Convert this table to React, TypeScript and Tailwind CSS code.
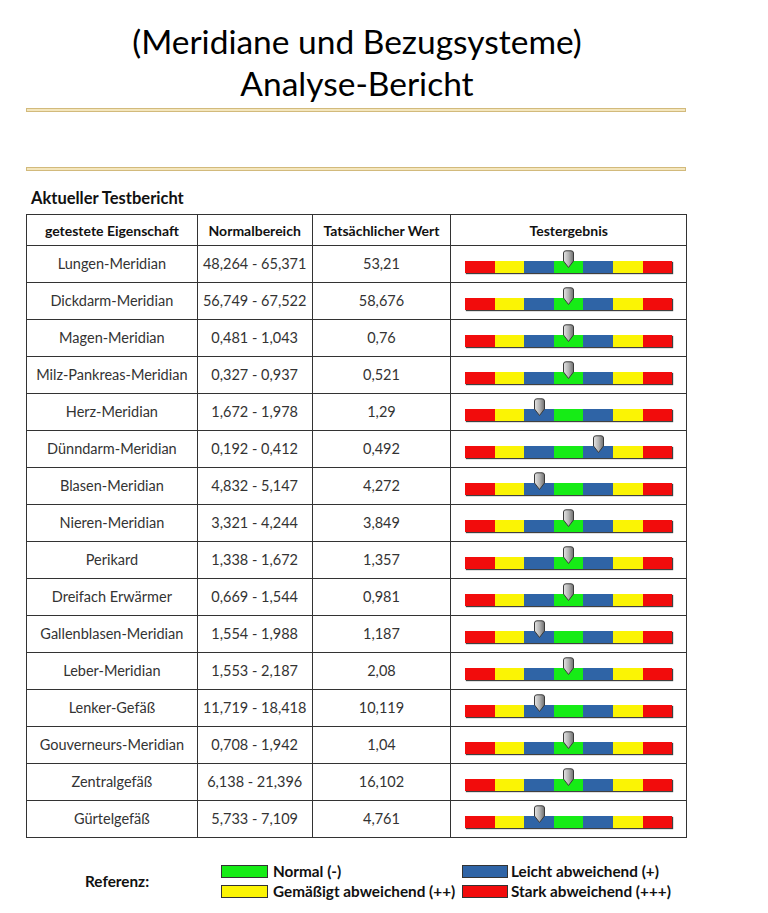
import React from "react";

const rows: [string, string, string, number][] = [
  ["Lungen-Meridian", "48,264 - 65,371", "53,21", 3],
  ["Dickdarm-Meridian", "56,749 - 67,522", "58,676", 3],
  ["Magen-Meridian", "0,481 - 1,043", "0,76", 3],
  ["Milz-Pankreas-Meridian", "0,327 - 0,937", "0,521", 3],
  ["Herz-Meridian", "1,672 - 1,978", "1,29", 2],
  ["Dünndarm-Meridian", "0,192 - 0,412", "0,492", 4],
  ["Blasen-Meridian", "4,832 - 5,147", "4,272", 2],
  ["Nieren-Meridian", "3,321 - 4,244", "3,849", 3],
  ["Perikard", "1,338 - 1,672", "1,357", 3],
  ["Dreifach Erwärmer", "0,669 - 1,544", "0,981", 3],
  ["Gallenblasen-Meridian", "1,554 - 1,988", "1,187", 2],
  ["Leber-Meridian", "1,553 - 2,187", "2,08", 3],
  ["Lenker-Gefäß", "11,719 - 18,418", "10,119", 2],
  ["Gouverneurs-Meridian", "0,708 - 1,942", "1,04", 3],
  ["Zentralgefäß", "6,138 - 21,396", "16,102", 3],
  ["Gürtelgefäß", "5,733 - 7,109", "4,761", 2],
];

const SEG = ["#f20c0c", "#fbf404", "#2f64a6", "#16ec16", "#2f64a6", "#fbf404", "#f20c0c"];

function Marker() {
  return (
    <svg width="13" height="19" viewBox="0 0 13 19">
      <defs>
        <linearGradient id="mg" x1="0" x2="1" y1="0" y2="0">
          <stop offset="0" stopColor="#e6e6e6" />
          <stop offset="0.5" stopColor="#b4b4b4" />
          <stop offset="1" stopColor="#6e6e6e" />
        </linearGradient>
      </defs>
      <path d="M1.5 3 Q1.5 0.8 4 0.8 L9 0.8 Q11.5 0.8 11.5 3 L11.5 11 L6.5 17.5 L1.5 11 Z" fill="url(#mg)" stroke="#3a3a3a" strokeWidth="1" />
    </svg>
  );
}

function Bar({ pos }: { pos: number }) {
  const seg = 29.6;
  return (
    <div className="relative w-[207px] h-[12px] shadow-[1px_1px_1px_rgba(0,0,0,0.75)]">
      <div className="flex h-full w-full">
        {SEG.map((c, i) => (
          <div key={i} className="h-full flex-1" style={{ background: c }} />
        ))}
      </div>
      <div className="absolute top-[-11px]" style={{ left: (pos + 0.5) * seg - 6.5 }}>
        <Marker />
      </div>
    </div>
  );
}

export default function App() {
  return (
    <div className="w-[768px] h-[913px] bg-white text-[#222]" style={{ fontFamily: "Lato, 'Open Sans', sans-serif" }}>
      <div className="pt-[20px] flex flex-col items-center text-[33.5px] leading-[42px] text-black w-[714px]">
        <div>(Meridiane und Bezugsysteme)</div>
        <div>Analyse-Bericht</div>
      </div>
      <div className="ml-[26px] w-[660px]">
        <div className="mt-[4px] h-[4px] bg-[#f4e6bd] border border-[#d2ba7c]" />
        <div className="mt-[55px] h-[4px] bg-[#f4e6bd] border border-[#d2ba7c]" />
      </div>
      <div className="ml-[31px] mt-[18px] text-[16.5px] font-bold leading-[19px] text-[#111]">Aktueller Testbericht</div>
      <div className="ml-[26px] mt-[6px] w-[661px]">
        <table className="border-collapse border border-[#333] w-full text-[14.5px] text-center">
          <colgroup>
            <col className="w-[171px]" />
            <col className="w-[115px]" />
            <col className="w-[139px]" />
            <col className="w-[236px]" />
          </colgroup>
          <thead>
            <tr className="h-[31px]">
              {["getestete Eigenschaft", "Normalbereich", "Tatsächlicher Wert", "Testergebnis"].map((h) => (
                <th key={h} className="border border-[#333] font-bold text-[14px] text-[#111] p-0 whitespace-nowrap">{h}</th>
              ))}
            </tr>
          </thead>
          <tbody>
            {rows.map(([n, r, v, p]) => (
              <tr key={n} className="h-[37px]">
                <td className="border border-[#333] p-0 text-[#333] whitespace-nowrap">{n}</td>
                <td className="border border-[#333] p-0 text-[#333] whitespace-nowrap">{r}</td>
                <td className="border border-[#333] p-0 text-[#333]">{v}</td>
                <td className="border border-[#333] p-0">
                  <div className="flex justify-center pt-[6px]">
                    <Bar pos={p} />
                  </div>
                </td>
              </tr>
            ))}
          </tbody>
        </table>
      </div>
      <div className="mt-[26px] flex items-center text-[15.3px] font-bold text-[#111]">
        <div className="ml-[85px] w-[136px]">Referenz:</div>
        <div className="grid grid-cols-[241px_220px] gap-y-[5px] leading-[15px]">
          <div className="flex items-center gap-[5px]"><span className="w-[47px] h-[13px] bg-[#16ec16] border border-[#333]" />Normal (-)</div>
          <div className="flex items-center gap-[3px]"><span className="w-[46px] h-[13px] bg-[#2f64a6] border border-[#333]" />Leicht abweichend (+)</div>
          <div className="flex items-center gap-[5px]"><span className="w-[47px] h-[13px] bg-[#fbf404] border border-[#333]" />Gemäßigt abweichend (++)</div>
          <div className="flex items-center gap-[3px]"><span className="w-[46px] h-[13px] bg-[#f20c0c] border border-[#333]" />Stark abweichend (+++)</div>
        </div>
      </div>
    </div>
  );
}
